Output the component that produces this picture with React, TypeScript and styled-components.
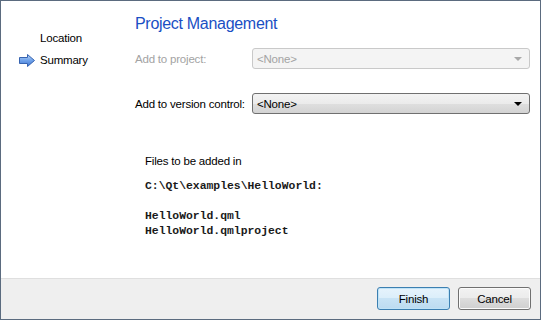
import React from "react";
import styled, { createGlobalStyle } from "styled-components";

const Global = createGlobalStyle`
  html, body { margin: 0; padding: 0; background: #ffffff; }
  * { box-sizing: border-box; }
`;

const Window = styled.div`
  width: 541px;
  height: 320px;
  border: 1px solid #5b6b7f;
  display: flex;
  flex-direction: column;
  background: #ffffff;
  font-family: "Liberation Sans", Arial, sans-serif;
  font-size: 11.5px;
  letter-spacing: -0.2px;
  color: #000;
`;

const Content = styled.div`
  flex: 1;
  display: flex;
`;

const Sidebar = styled.div`
  width: 133px;
  padding-top: 26px;
  display: flex;
  flex-direction: column;
`;

const StepItem = styled.div`
  height: 22px;
  display: flex;
  align-items: center;
  padding-left: 18px;
`;

const StepIcon = styled.div`
  width: 21px;
  display: flex;
  align-items: center;
`;

const Main = styled.div`
  flex: 1;
  padding: 13px 9px 0 1px;
  display: flex;
  flex-direction: column;
`;

const Title = styled.div`
  font-size: 16px;
  letter-spacing: -0.3px;
  line-height: 20px;
  color: #1a4fc4;
`;

const Form = styled.div`
  margin-top: 14px;
  display: grid;
  grid-template-columns: 117px 278px;
  row-gap: 24px;
  align-items: center;
`;

const Label = styled.div<{ $disabled?: boolean }>`
  color: ${(p) => (p.$disabled ? "#a3a3a3" : "#000")};
`;

const Combo = styled.div<{ $disabled?: boolean }>`
  height: 21px;
  border: 1px solid ${(p) => (p.$disabled ? "#c9c9c9" : "#707070")};
  border-radius: 3px;
  background: ${(p) =>
    p.$disabled
      ? "#f4f4f4"
      : "linear-gradient(to bottom, #f3f3f3 0%, #ebebeb 50%, #dfdfdf 50%, #d3d3d3 100%)"};
  color: ${(p) => (p.$disabled ? "#a3a3a3" : "#000")};
  display: flex;
  align-items: center;
  justify-content: space-between;
  padding: 0 7px 0 4px;
`;

const Arrow = styled.div<{ $disabled?: boolean }>`
  width: 0;
  height: 0;
  border-left: 4px solid transparent;
  border-right: 4px solid transparent;
  border-top: 4px solid ${(p) => (p.$disabled ? "#a8a8a8" : "#000")};
`;

const Files = styled.div`
  margin-top: 40px;
  padding-left: 10px;
  display: flex;
  flex-direction: column;
`;

const FilesLabel = styled.div`
  line-height: 15px;
`;

const Mono = styled.pre`
  margin: 10px 0 0 0;
  font-family: "Liberation Mono", "Courier New", monospace;
  font-size: 11.4px;
  letter-spacing: 0;
  line-height: 15px;
  color: #1a1a1a;
  font-weight: bold;
`;

const Footer = styled.div`
  height: 41px;
  border-top: 1px solid #dfdfdf;
  background: #efefef;
  display: flex;
  justify-content: flex-end;
  align-items: flex-start;
  gap: 8px;
  padding: 8px 9px 0 0;
`;

const Button = styled.button<{ $default?: boolean }>`
  width: 73px;
  height: 23px;
  border-radius: 3px;
  font-family: "Liberation Sans", Arial, sans-serif;
  font-size: 11.5px;
  letter-spacing: -0.2px;
  color: #000;
  padding: 0;
  border: 1px solid ${(p) => (p.$default ? "#3c7fb1" : "#707070")};
  box-shadow: inset 0 0 0 1px ${(p) => (p.$default ? "#bfe3f7" : "#fbfbfb")};
  background: ${(p) =>
    p.$default
      ? "linear-gradient(to bottom, #e6f3fc 0%, #dbeefa 50%, #c8e3f5 50%, #bcdbf0 100%)"
      : "linear-gradient(to bottom, #f2f2f2 0%, #ebebeb 50%, #dddddd 50%, #cfcfcf 100%)"};
`;

const ArrowIcon = () => (
  <svg width="17" height="13" viewBox="0 0 17 13">
    <defs>
      <linearGradient id="ag" x1="0" y1="0" x2="0" y2="1">
        <stop offset="0" stopColor="#b8d5f7" />
        <stop offset="0.5" stopColor="#6fa2ea" />
        <stop offset="1" stopColor="#3d74d1" />
      </linearGradient>
    </defs>
    <path
      d="M0.5 3.5 H8.5 V0.5 L15.5 6.5 L8.5 12.5 V9.5 H0.5 Z"
      fill="url(#ag)"
      stroke="#3663b0"
      strokeWidth="1"
      strokeLinejoin="round"
    />
  </svg>
);

export default function App() {
  return (
    <>
      <Global />
      <Window>
        <Content>
          <Sidebar>
            <StepItem>
              <StepIcon />
              Location
            </StepItem>
            <StepItem>
              <StepIcon>
                <ArrowIcon />
              </StepIcon>
              Summary
            </StepItem>
          </Sidebar>
          <Main>
            <Title>Project Management</Title>
            <Form>
              <Label $disabled>Add to project:</Label>
              <Combo $disabled>
                <span>&lt;None&gt;</span>
                <Arrow $disabled />
              </Combo>
              <Label>Add to version control:</Label>
              <Combo>
                <span>&lt;None&gt;</span>
                <Arrow />
              </Combo>
            </Form>
            <Files>
              <FilesLabel>Files to be added in</FilesLabel>
              <Mono>{"C:\\Qt\\examples\\HelloWorld:\n\nHelloWorld.qml\nHelloWorld.qmlproject"}</Mono>
            </Files>
          </Main>
        </Content>
        <Footer>
          <Button $default>Finish</Button>
          <Button>Cancel</Button>
        </Footer>
      </Window>
    </>
  );
}
